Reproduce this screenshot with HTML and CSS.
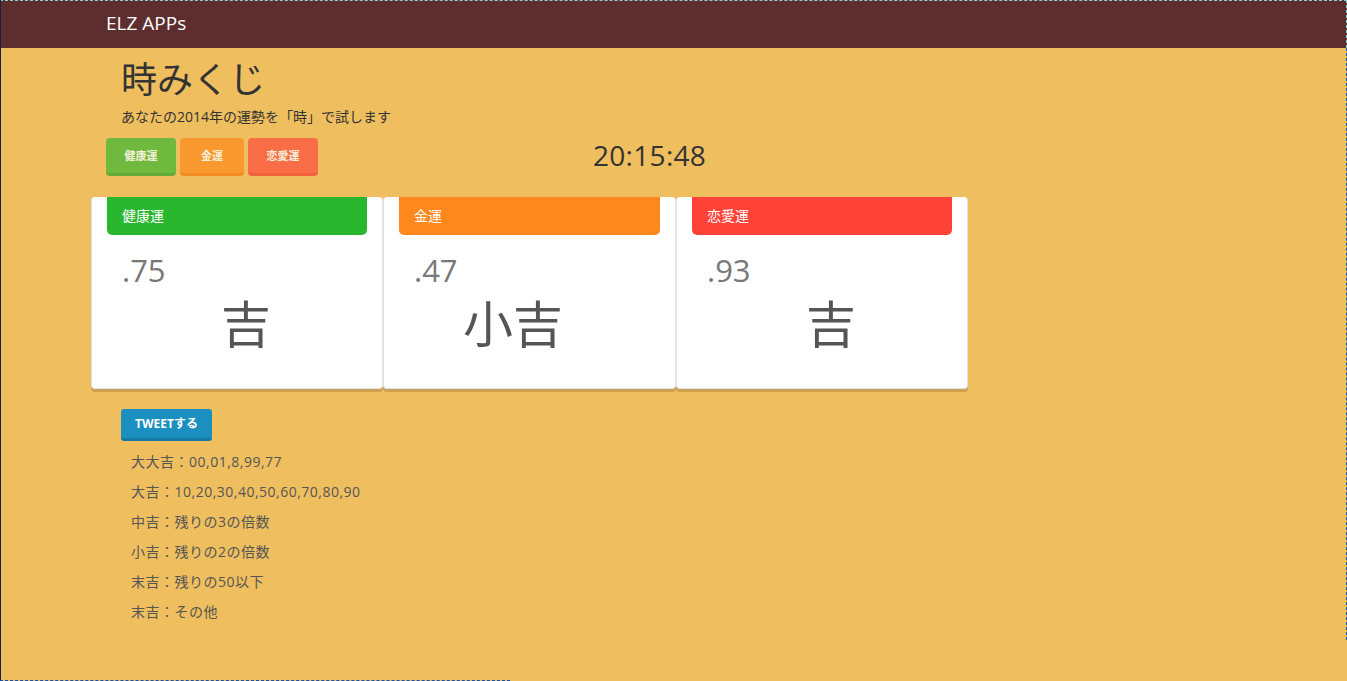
FILE: index.html
```html
<!DOCTYPE html>
<html lang="ja">
<head>
<meta charset="utf-8">
<title>時みくじ</title>
<link rel="stylesheet" href="styles.css">
</head>
<body>
<header class="navbar"><span class="brand">ELZ APPs</span></header>
<main class="container">
  <h1 class="title">時みくじ</h1>
  <p class="lead">あなたの2014年の運勢を「時」で試します</p>
  <div class="toolbar">
    <div class="btns">
      <span class="btn btn-green">健康運</span>
      <span class="btn btn-orange">金運</span>
      <span class="btn btn-red">恋愛運</span>
    </div>
    <div class="clock">20:15:48</div>
  </div>
  <div class="cards">
    <div class="card">
      <div class="card-head head-green">健康運</div>
      <div class="num">.75</div>
      <div class="luck">吉</div>
    </div>
    <div class="card">
      <div class="card-head head-orange">金運</div>
      <div class="num">.47</div>
      <div class="luck">小吉</div>
    </div>
    <div class="card">
      <div class="card-head head-red">恋愛運</div>
      <div class="num">.93</div>
      <div class="luck">吉</div>
    </div>
  </div>
  <span class="tweet">TWEETする</span>
  <ul class="rules">
    <li>大大吉：00,01,8,99,77</li>
    <li>大吉：10,20,30,40,50,60,70,80,90</li>
    <li>中吉：残りの3の倍数</li>
    <li>小吉：残りの2の倍数</li>
    <li>末吉：残りの50以下</li>
    <li>末吉：その他</li>
  </ul>
</main>
<div class="frame-top"></div>
<div class="frame-left"></div>
<div class="frame-right-a"></div>
<div class="frame-right-b"></div>
<div class="frame-bottom"></div>
</body>
</html>
```
FILE: styles.css
```css
html, body {
  margin: 0;
  padding: 0;
  height: 100%;
}
body {
  background: #efbe5f;
  font-family: "Open Sans", "Noto Sans CJK JP", sans-serif;
  color: #333;
  overflow: hidden;
}
.navbar {
  height: 48px;
  background: #5e2e2f;
  display: flex;
  align-items: center;
}
.brand {
  margin-left: 106px;
  color: #fff;
  font-size: 19px;
  margin-top: -2px;
}
.container {
  padding-left: 91px;
}
.title {
  margin: 6px 0 0 30px;
  font-size: 36px;
  font-weight: normal;
  line-height: 46px;
  color: #333;
  font-family: "Noto Sans CJK JP", sans-serif;
}
.lead {
  margin: 7px 0 0 30px;
  font-size: 14px;
  line-height: 20px;
  color: #333;
}
.toolbar {
  display: flex;
  align-items: center;
  margin-top: 11px;
  margin-left: 15px;
}
.btns {
  display: flex;
  gap: 4px;
}
.btn {
  display: block;
  height: 35px;
  line-height: 35px;
  border-bottom: 3px solid;
  border-radius: 4px;
  font-size: 11px;
  font-weight: bold;
  color: #f4f0d8;
  text-align: center;
  font-family: "Noto Sans CJK JP", sans-serif;
}
.btn-green { width: 70px; background: #6fba3e; border-color: #64aa36; }
.btn-orange { width: 64px; background: #f9982f; border-color: #f28c22; }
.btn-red { width: 70px; background: #f96d47; border-color: #f0603a; }
.clock {
  margin-left: 275px;
  font-size: 28px;
  color: #333;
  letter-spacing: 0.3px;
  margin-top: -4px;
}
.cards {
  display: grid;
  grid-template-columns: 292px 293px 292px;
  margin-top: 21px;
}
.card {
  background: #fff;
  height: 192px;
  border-radius: 4px;
  border: 1px solid #e2e2e2;
  border-top: none;
  box-sizing: border-box;
  box-shadow: 0 3px 0 #cfa154;
}
.card-head {
  margin: 0 15px;
  height: 38px;
  line-height: 37px;
  border-radius: 0 0 5px 5px;
  color: #fff;
  font-size: 14px;
  padding-left: 15px;
  font-family: "Noto Sans CJK JP", sans-serif;
}
.head-green { background: #28b72f; }
.head-orange { background: #fe871e; }
.head-red { background: #ff4238; }
.num {
  margin: 16px 0 0 30px;
  font-size: 31px;
  line-height: 38px;
  color: #787878;
}
.luck {
  width: 179px;
  text-align: right;
  font-size: 50px;
  line-height: 60px;
  margin-top: 2px;
  color: #555;
  font-family: "Noto Sans CJK JP", sans-serif;
}
.tweet {
  display: inline-block;
  margin: 20px 0 0 30px;
  width: 91px;
  height: 29px;
  line-height: 29px;
  background: #1b8fbf;
  border-bottom: 3px solid #147ba6;
  border-radius: 3px;
  color: #fff;
  font-size: 12px;
  font-weight: bold;
  text-align: center;
}
.rules {
  list-style: none;
  margin: 6px 0 0 40px;
  padding: 0;
}
.rules li {
  font-size: 14px;
  letter-spacing: 0.5px;
  line-height: 30px;
  color: #555;
}
.frame-top {
  position: fixed;
  top: 0; left: 0; right: 0;
  border-top: 1px dashed #8ecfd4;
}
.frame-left {
  position: fixed;
  top: 0; bottom: 0; left: 0;
  border-left: 1px solid #1b1d45;
}
.frame-right-a {
  position: fixed;
  top: 0; right: 0; height: 48px;
  border-right: 1px dashed #8ecfd4;
}
.frame-right-b {
  position: fixed;
  top: 48px; right: 0; height: 592px;
  border-right: 1px dashed #1450b8;
}
.frame-bottom {
  position: fixed;
  bottom: 0; left: 0; width: 510px;
  border-bottom: 1px dashed #1450b8;
}
```
